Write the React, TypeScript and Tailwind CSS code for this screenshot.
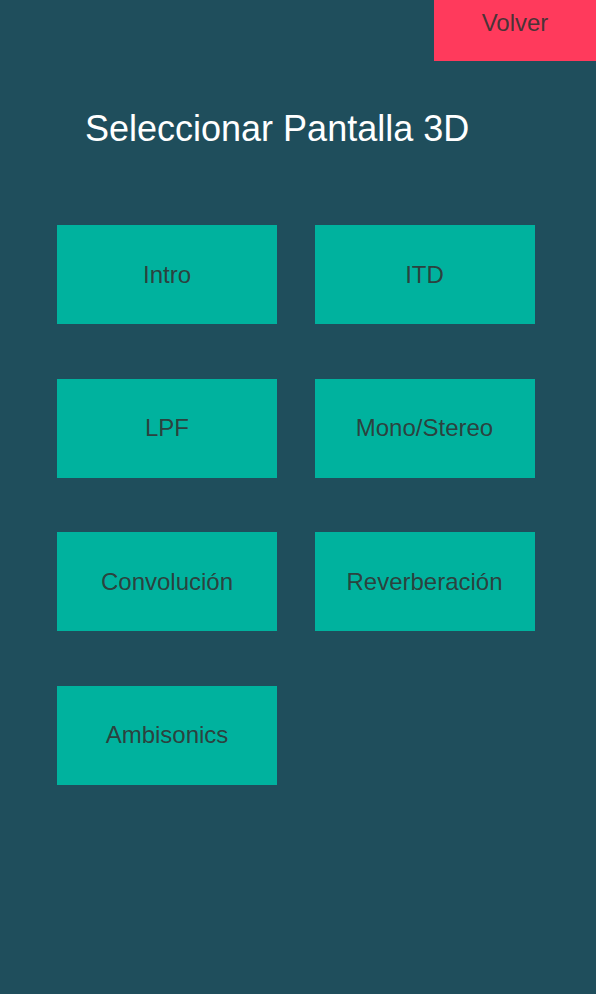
const items = ["Intro", "ITD", "LPF", "Mono/Stereo", "Convolución", "Reverberación", "Ambisonics"];

const App = () => {
  return (
    <div className="flex flex-col w-[596px] h-[994px] bg-[#1f4e5c] font-['Liberation_Sans',Arial,sans-serif]">
      <div className="flex justify-end">
        <div className="w-[162px] h-[61px] bg-[#ff3a5c] text-[24px] leading-[46px] text-[#323232]/90 text-center">
          Volver
        </div>
      </div>
      <h1 className="pl-[85px] mt-[46px] text-[36px] leading-[44px] text-white">Seleccionar Pantalla 3D</h1>
      {/* Screens */}
      <div className="grid grid-cols-[220px_220px] gap-x-[37.5px] gap-y-[54.67px] ml-[57px] mt-[74px]">
        {items.map((item) => (
          <button key={item} className="h-[99px] bg-[#00b29e] text-[24px] text-[#323232]/90 flex items-center justify-center">
            {item}
          </button>
        ))}
      </div>
    </div>
  );
};

export default App;
